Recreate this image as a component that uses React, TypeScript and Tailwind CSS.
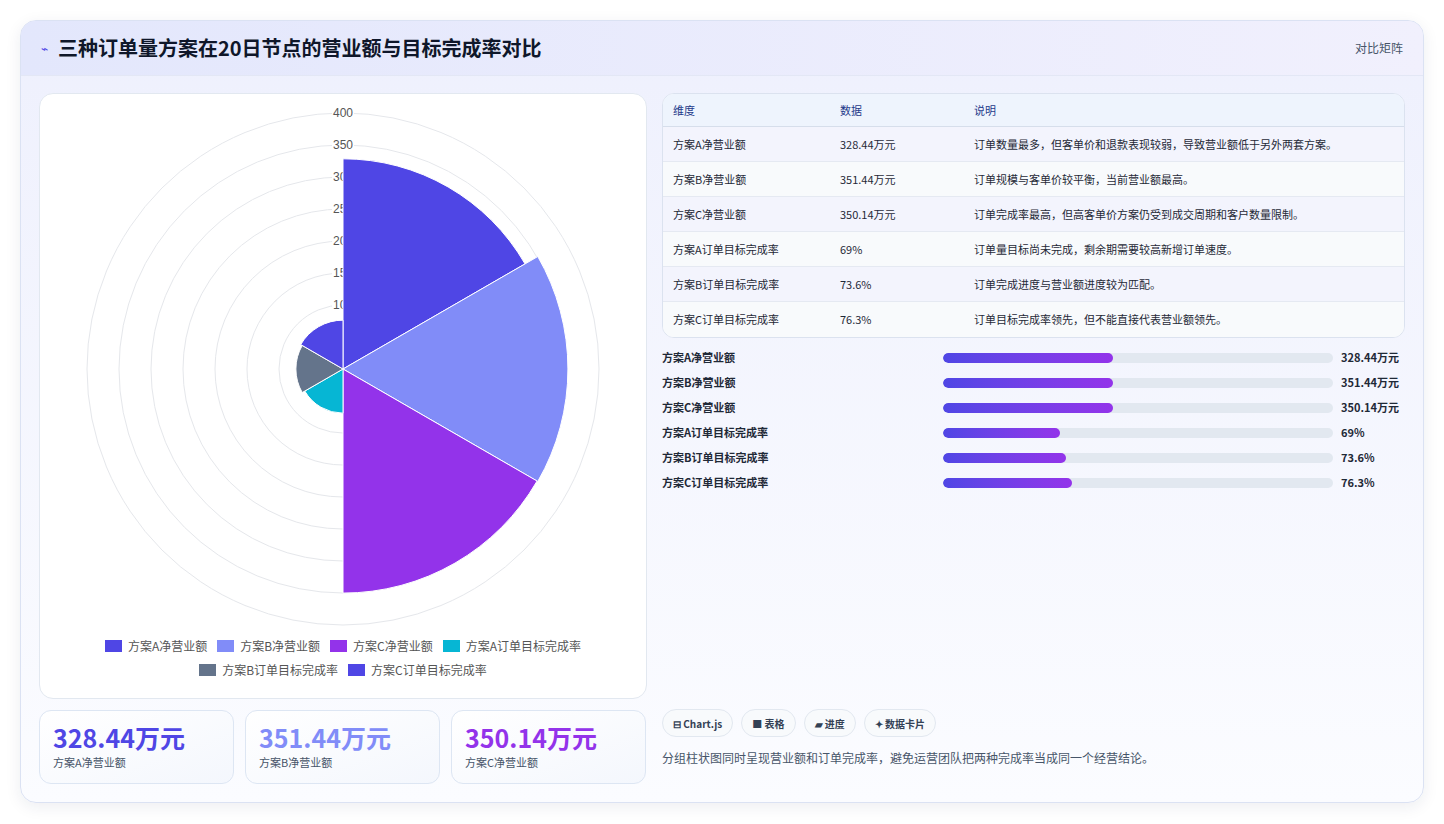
import React from "react";

const F = { fontFamily: '"Noto Sans CJK SC", "Noto Sans", sans-serif' };
const cx = 303, cy = 275, k = 0.64;
const segs = [
  { v: 328.44, c: "#4f46e5" },
  { v: 351.44, c: "#818cf8" },
  { v: 350.14, c: "#9333ea" },
  { v: 69, c: "#06b6d4" },
  { v: 73.6, c: "#64748b" },
  { v: 76.3, c: "#4f46e5" },
];
function arc(i: number, v: number) {
  const r = v * k;
  const a0 = ((-90 + i * 60) * Math.PI) / 180, a1 = ((-30 + i * 60) * Math.PI) / 180;
  return `M${cx},${cy} L${cx + r * Math.cos(a0)},${cy + r * Math.sin(a0)} A${r},${r} 0 0 1 ${cx + r * Math.cos(a1)},${cy + r * Math.sin(a1)} Z`;
}
const rows = [
  ["方案A净营业额", "328.44万元", "订单数量最多，但客单价和退款表现较弱，导致营业额低于另外两套方案。"],
  ["方案B净营业额", "351.44万元", "订单规模与客单价较平衡，当前营业额最高。"],
  ["方案C净营业额", "350.14万元", "订单完成率最高，但高客单价方案仍受到成交周期和客户数量限制。"],
  ["方案A订单目标完成率", "69%", "订单量目标尚未完成，剩余期需要较高新增订单速度。"],
  ["方案B订单目标完成率", "73.6%", "订单完成进度与营业额进度较为匹配。"],
  ["方案C订单目标完成率", "76.3%", "订单目标完成率领先，但不能直接代表营业额领先。"],
];
const bars = [
  ["方案A净营业额", 43.5, "328.44万元"],
  ["方案B净营业额", 43.5, "351.44万元"],
  ["方案C净营业额", 43.5, "350.14万元"],
  ["方案A订单目标完成率", 30, "69%"],
  ["方案B订单目标完成率", 31.6, "73.6%"],
  ["方案C订单目标完成率", 33, "76.3%"],
] as const;
const legend = [
  ["方案A净营业额", "#4f46e5"], ["方案B净营业额", "#818cf8"], ["方案C净营业额", "#9333ea"],
  ["方案A订单目标完成率", "#06b6d4"], ["方案B订单目标完成率", "#64748b"], ["方案C订单目标完成率", "#4f46e5"],
];

export default function App() {
  return (
    <div style={F} className="w-[1444px] h-[824px] bg-white pt-[20px] px-[20px]">
      <div className="h-[783px] rounded-[16px] border border-[#dbe2f3] bg-gradient-to-b from-[#eef0fd] to-[#fbfcff] shadow-[0_4px_16px_rgba(30,41,80,0.08)] overflow-hidden flex flex-col">
        <div className="h-[55px] shrink-0 flex items-center justify-between px-[20px] bg-gradient-to-r from-[#e3e7fc] to-[#f1f0fd] border-b border-[#e3e7f5]">
          <div className="flex items-center gap-[10px]">
            <span className="text-[#4f46e5] text-[12px]">⌁</span>
            <span className="text-[20px] font-bold text-[#0f172a]">三种订单量方案在20日节点的营业额与目标完成率对比</span>
          </div>
          <span className="text-[12px] text-[#475569]">对比矩阵</span>
        </div>
        <div className="flex gap-[15px] px-[18px] pt-[17px]">
          <div className="w-[608px] flex flex-col gap-[11px]">
            <div className="h-[606px] rounded-[14px] border border-[#e2e8f0] bg-white flex flex-col items-center">
              <svg width="606" height="540" className="mt-[0px]">
                {[1, 2, 3, 4, 5, 6, 7, 8].map((n) => (
                  <circle key={n} cx={cx} cy={cy} r={n * 32} fill="none" stroke="#e5e7eb" strokeWidth="1" />
                ))}
                {[1, 2, 3, 4, 5, 6, 7, 8].map((n) => (
                  <g key={n}>
                    <rect x={cx - 11} y={cy - n * 32 - 7} width="22" height="13" fill="white" />
                    <text x={cx} y={cy - n * 32 + 4} fontSize="12" fill="#555" textAnchor="middle" fontFamily="Liberation Sans, sans-serif">{n * 50}</text>
                  </g>
                ))}
                {segs.map((s, i) => (
                  <path key={i} d={arc(i, s.v)} fill={s.c} stroke="white" strokeWidth="1" />
                ))}
              </svg>
              <div className="w-[500px] flex flex-wrap justify-center gap-x-[10px] gap-y-[6px] text-[12px] text-[#555] mt-[3px]">
                {legend.map(([t, c]) => (
                  <div key={t} className="flex items-center gap-[6px]">
                    <span className="w-[17px] h-[12px]" style={{ background: c }} />
                    <span>{t}</span>
                  </div>
                ))}
              </div>
            </div>
            <div className="flex gap-[11px]">
              {[["328.44万元", "#4f46e5", "方案A净营业额"], ["351.44万元", "#818cf8", "方案B净营业额"], ["350.14万元", "#9333ea", "方案C净营业额"]].map(([v, c, l]) => (
                <div key={l} className="w-[195px] h-[74px] rounded-[12px] border border-[#dde6f3] bg-gradient-to-br from-white to-[#f4f7fd] px-[13px] pt-[10px]">
                  <div className="text-[25px] font-bold leading-[32px]" style={{ color: c }}>{v}</div>
                  <div className="text-[11px] text-[#475569] mt-[1px]">{l}</div>
                </div>
              ))}
            </div>
          </div>
          <div className="flex-1 flex flex-col">
            <div className="rounded-[12px] border border-[#dbe2ef] bg-white overflow-hidden text-[11px]">
              <div className="flex h-[33px] items-center bg-[#eef4fd] text-[#1e3a8a] border-b border-[#d6deeb]">
                <div className="w-[177px] pl-[10px]">维度</div>
                <div className="w-[134px]">数据</div>
                <div>说明</div>
              </div>
              {rows.map((r, i) => (
                <div key={i} className={`flex h-[35px] items-center text-[#1f2937] ${i % 2 === 0 ? "bg-[#f3f4fd]" : "bg-[#f8fafc]"} ${i < 5 ? "border-b border-[#e5e9f2]" : ""}`}>
                  <div className="w-[177px] pl-[10px]">{r[0]}</div>
                  <div className="w-[134px]">{r[1]}</div>
                  <div>{r[2]}</div>
                </div>
              ))}
            </div>
            <div className="mt-[11px] flex flex-col gap-[8px]">
              {bars.map(([l, w, v]) => (
                <div key={l} className="flex items-center h-[17px] text-[11px] font-bold text-[#1f2937]">
                  <div className="w-[281px]">{l}</div>
                  <div className="w-[390px] h-[10px] rounded-full bg-[#e2e8f0] overflow-hidden">
                    <div className="h-full rounded-full bg-gradient-to-r from-[#4f46e5] to-[#9333ea]" style={{ width: `${w}%` }} />
                  </div>
                  <div className="ml-[8px]">{v}</div>
                </div>
              ))}
            </div>
            <div className="mt-auto mb-[17px]">
              <div className="flex gap-[8px] text-[10px] font-bold text-[#334155]">
                {["⊟ Chart.js", "■ 表格", "▰ 进度", "✦ 数据卡片"].map((t) => (
                  <span key={t} className="h-[28px] px-[10px] rounded-full border border-[#e2e8f0] bg-[#f8fafc] flex items-center">{t}</span>
                ))}
              </div>
              <div className="mt-[12px] text-[12px] text-[#475569]">分组柱状图同时呈现营业额和订单完成率，避免运营团队把两种完成率当成同一个经营结论。</div>
            </div>
          </div>
        </div>
      </div>
    </div>
  );
}
